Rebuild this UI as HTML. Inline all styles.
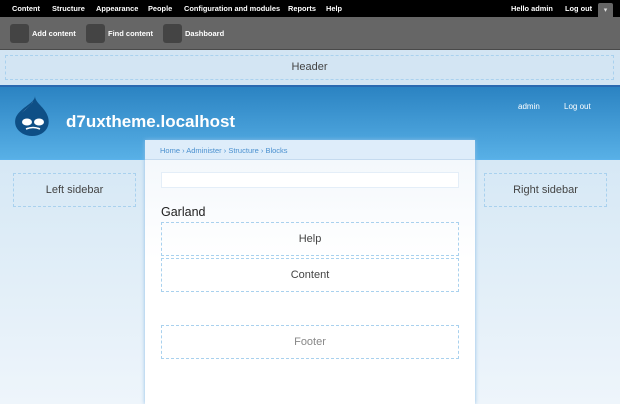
<!DOCTYPE html>
<html><head><style>
*{margin:0;padding:0;box-sizing:border-box}
body{width:620px;height:404px;overflow:hidden;font-family:"Liberation Sans",sans-serif;background:linear-gradient(#d6e8f5 160px,#eef5fb 404px);position:relative}
.a{position:absolute}
.top{left:0;top:0;width:620px;height:17px;background:#000;color:#fff;font-size:7.4px;font-weight:bold}
.top span{position:absolute;top:4px;white-space:nowrap}
.sc{top:17px;left:0;width:620px;height:33px;background:#666;border-bottom:1px solid #4a4a4a}
.sq{width:19px;height:19px;background:#444;border-radius:3px;top:24px}
.sl{color:#fff;font-size:7.5px;font-weight:bold;top:29px}
.hdr{top:50px;left:0;width:620px;height:35px;background:#d3e5f3}
.dash{border:1px dashed #a9d1ee;text-align:center;color:#444;font-size:11px}
.ban{top:85px;left:0;width:620px;height:75px;background:linear-gradient(#2b83c2,#58b0e6);border-top:2px solid #2a69b0;border-bottom:1px solid #5ab2ec}
.panel{left:145px;top:140px;width:330px;height:264px;background:linear-gradient(#eef5fb 20px,#f4f8fc 20px,#fff 120px);box-shadow:0 0 4px #8cbde6}
.bc{left:145px;top:140px;width:330px;height:20px;background:rgba(220,236,249,.9);border-bottom:1px solid #c5dbef;font-size:7.5px;color:#4a90cf;padding:6px 15px}
</style></head><body>
<div class="a top">
<span style="left:12px">Content</span><span style="left:52px">Structure</span><span style="left:96px">Appearance</span><span style="left:148px">People</span><span style="left:184px">Configuration and modules</span><span style="left:288px">Reports</span><span style="left:326px">Help</span>
<span style="left:511px">Hello admin</span><span style="left:565px">Log out</span>
</div>
<div class="a" style="left:598px;top:3px;width:15px;height:16px;background:#666;border-radius:2px 2px 0 0;color:#ddd;font-size:7px;text-align:center;line-height:16px">▾</div>
<div class="a sc"></div>
<div class="a sq" style="left:10px"></div><div class="a sl" style="left:32px">Add content</div>
<div class="a sq" style="left:86px"></div><div class="a sl" style="left:108px">Find content</div>
<div class="a sq" style="left:163px"></div><div class="a sl" style="left:185px">Dashboard</div>
<div class="a hdr"></div>
<div class="a dash" style="left:5px;top:55px;width:609px;height:25px;line-height:23px;font-size:11px">Header</div>
<div class="a ban"></div>
<svg class="a" style="left:13px;top:95px" width="40" height="42" viewBox="0 0 40 42"><path d="M22 1 C22 8 8 12 3 22 C-1 33 9 41 19 41 C31 41 38 32 35 22 C32 12 22 8 22 1Z" fill="#0e4f86"/><path d="M20 6 C19 10 12 14 8 19 C11 15 18 11 20 6Z" fill="#fff"/><ellipse cx="14" cy="27" rx="5" ry="3.5" fill="#fff"/><ellipse cx="26" cy="27" rx="5" ry="3.5" fill="#fff"/><path d="M13 34 Q20 31 27 34" stroke="#fff" stroke-width="1.5" fill="none"/></svg>
<div class="a" style="left:66px;top:112px;color:#fff;font-size:17px;font-weight:bold">d7uxtheme.localhost</div>
<div class="a" style="left:518px;top:102px;color:#fff;font-size:8px">admin</div>
<div class="a" style="left:564px;top:102px;color:#fff;font-size:8px">Log out</div>
<div class="a panel"></div>
<div class="a bc">Home › Administer › Structure › Blocks</div>
<div class="a" style="left:161px;top:172px;width:298px;height:16px;background:#fff;border:1px solid #e4eef8"></div>
<div class="a dash" style="left:13px;top:173px;width:123px;height:34px;line-height:32px">Left sidebar</div>
<div class="a dash" style="left:484px;top:173px;width:123px;height:34px;line-height:32px">Right sidebar</div>
<div class="a" style="left:161px;top:205px;font-size:12.5px;color:#222">Garland</div>
<div class="a dash" style="left:161px;top:222px;width:298px;height:34px;line-height:32px">Help</div>
<div class="a dash" style="left:161px;top:258px;width:298px;height:34px;line-height:32px">Content</div>
<div class="a dash" style="left:161px;top:325px;width:298px;height:34px;line-height:32px;color:#888">Footer</div>
</body></html>
